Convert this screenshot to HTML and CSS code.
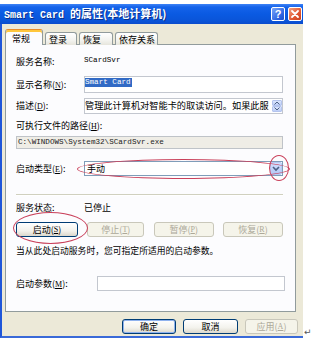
FILE: index.html
```html
<!DOCTYPE html>
<html>
<head>
<meta charset="utf-8">
<link rel="stylesheet" href="styles.css">
</head>
<body>
<div class="page">
  <div class="window">
    <div class="titlebar">
      <div class="title"><span class="lat">Smart Card </span>的属性(本地计算机)</div>
      <div class="tbtns">
        <div class="tbtn help">?</div>
        <div class="tbtn close"><svg width="12" height="12" viewBox="0 0 12 12"><path d="M3 3 L9 9 M9 3 L3 9" stroke="#fff" stroke-width="1.8" stroke-linecap="round"/></svg></div>
      </div>
    </div>
    <div class="frame">
      <div class="tabs">
        <div class="tab active t1">常规</div>
        <div class="tab t2">登录</div>
        <div class="tab t3">恢复</div>
        <div class="tab t4">依存关系</div>
      </div>
      <div class="panel">
        <div class="row r1"><div class="label">服务名称:</div><div class="mono val-mono">SCardSvr</div></div>
        <div class="row r2"><div class="label">显示名称(<u>N</u>):</div><div class="field f-name"><span class="sel mono">Smart Card</span></div></div>
        <div class="row r3"><div class="label">描述(<u>D</u>):</div><div class="field f-desc"><span class="desc">管理此计算机对智能卡的取读访问。如果此服</span><div class="spin"><div class="sb"><svg width="6" height="4" viewBox="0 0 6 4"><path d="M0.5 3.5 L3 1 L5.5 3.5" fill="none" stroke="#4d6185" stroke-width="1"/></svg></div><div class="sb"><svg width="6" height="4" viewBox="0 0 6 4"><path d="M0.5 0.5 L3 3 L5.5 0.5" fill="none" stroke="#4d6185" stroke-width="1"/></svg></div></div></div></div>
        <div class="row r4"><div class="label">可执行文件的路径(<u>H</u>):</div></div>
        <div class="row r5"><div class="field f-path mono">C:\WINDOWS\System32\SCardSvr.exe</div></div>
        <div class="row r6"><div class="label">启动类型(<u>E</u>):</div><div class="combo"><span class="ctext">手动</span><div class="dd"><svg width="8" height="6" viewBox="0 0 8 6"><path d="M1 1 L4 4 L7 1" fill="none" stroke="#4d6185" stroke-width="1.6"/></svg></div></div></div>
        <div class="sep"></div>
        <div class="row r7"><div class="label">服务状态:</div><div class="val">已停止</div></div>
        <div class="row r8 btnrow">
          <div class="btn b-start">启动(<u>S</u>)</div>
          <div class="btn dis b-stop">停止(<u>T</u>)</div>
          <div class="btn dis b-pause">暂停(<u>P</u>)</div>
          <div class="btn dis b-resume">恢复(<u>R</u>)</div>
        </div>
        <div class="row r9">当从此处启动服务时，您可指定所适用的启动参数。</div>
        <div class="row r10"><div class="label lw">启动参数(<u>M</u>):</div><div class="field f-param"></div></div>
      </div>
      <div class="footer">
        <div class="btn def b-ok">确定</div>
        <div class="btn b-cancel">取消</div>
        <div class="btn dis b-apply">应用(<u>A</u>)</div>
      </div>
    </div>
    <div class="ring ring-combo"></div>
    <div class="ring ring-dd"></div>
    <div class="ring ring-start"></div>
  </div>
  <span class="ret">↵</span>
</div>
</body>
</html>
```

FILE: styles.css
```css
* { box-sizing: border-box; }
html, body { margin: 0; padding: 0; background: #fff; }
body {
  font-family: "Noto Sans CJK SC", "Noto Sans", sans-serif;
  font-size: 9px;
  color: #000;
  line-height: 1;
}
.page {
  width: 317px;
  height: 338px;
  display: flex;
  align-items: flex-end;
}
.window {
  position: relative;
  width: 303px;
  height: 334px;
  display: flex;
  flex-direction: column;
  flex: none;
}
.titlebar {
  height: 20px;
  flex: none;
  display: flex;
  align-items: center;
  justify-content: space-between;
  padding: 0 1px 0 4px;
  background: linear-gradient(#3f83f5 0, #1563ea 3px, #0a5ae2 50%, #0a54d8 85%, #0b4ccc 100%);
}
.title {
  color: #fff;
  font-weight: bold;
  font-size: 11px;
  white-space: nowrap;
  text-shadow: 1px 1px 0 #0b2f8a;
}
.title .lat {
  font-family: "Liberation Mono", monospace;
  font-size: 10px;
  white-space: pre;
}
.tbtns { display: flex; gap: 3px; }
.tbtn {
  width: 14px;
  height: 14px;
  border: 1px solid #fff;
  border-radius: 2px;
  display: flex;
  align-items: center;
  justify-content: center;
}
.help {
  background: linear-gradient(135deg, #7aa6fa, #2c62e0 70%, #1d4fcc);
  color: #fff;
  font-family: "Liberation Sans", sans-serif;
  font-weight: bold;
  font-size: 11px;
}
.close {
  background: linear-gradient(135deg, #f2a080, #e0552f 60%, #c9401e);
}
.frame {
  flex: 1;
  background: #ece9d8;
  border-left: 2px solid #1f56d9;
  border-bottom: 2px solid #3a6ad8;
  padding: 5px 0 0 3px;
  display: flex;
  flex-direction: column;
}
.tabs {
  display: flex;
  align-items: flex-end;
  height: 16px;
  margin-bottom: -1px;
  position: relative;
  z-index: 1;
}
.tab {
  height: 13px;
  border: 1px solid #919b9c;
  border-bottom: none;
  border-radius: 3px 3px 0 0;
  background: linear-gradient(#ffffff, #f3f3ef 60%, #e6e5dc);
  display: flex;
  align-items: center;
  padding-left: 3px;
  margin-right: 2px;
}
.tab.active {
  height: 16px;
  background: #fcfcfe;
  border-top: 1px solid #e68b2c;
  box-shadow: inset 0 2px 0 #ffc73c;
  padding-left: 6px;
  padding-top: 1px;
}
.t1 { width: 38px; }
.t2 { width: 32px; }
.t3 { width: 34px; margin-right: 2px; }
.t4 { width: 43px; }
.panel {
  width: 291px;
  height: 268px;
  border: 1px solid #919b9c;
  background: #fcfcfe;
  padding-left: 10px;
  display: flex;
  flex-direction: column;
}
.row {
  display: flex;
  align-items: center;
  flex: none;
}
.label { width: 68px; flex: none; white-space: nowrap; }
.label u, .btn u { font-family: "Liberation Serif", serif; font-size: 8px; }
.lw { width: 81px; }
.mono { font-family: "Liberation Mono", monospace; font-size: 7.6px; }
.r1 { margin-top: 9px; height: 14px; }
.r2 { margin-top: 8px; height: 17px; }
.r3 { margin-top: 5px; height: 16px; }
.r4 { margin-top: 5px; height: 14px; }
.r5 { margin-top: 3px; height: 13px; }
.r6 { margin-top: 12px; height: 15px; }
.sep {
  margin-top: 18px;
  width: 267px;
  height: 2px;
  border-top: 1px solid #d0d0bf;
  border-bottom: 1px solid #fff;
  flex: none;
}
.r7 { margin-top: 4px; height: 14px; }
.r8 { margin-top: 8px; height: 15px; }
.r9 { margin-top: 7px; height: 14px; font-size: 8.8px; white-space: nowrap; }
.r10 { margin-top: 18px; height: 15px; }
.field {
  border: 1px solid #c3c7cf;
  background: #fff;
  height: 100%;
}
.f-name {
  width: 199px;
  display: flex;
  align-items: flex-start;
  padding-top: 1px;
}
.sel {
  background: #316ac5;
  color: #fff;
  height: 9px;
  line-height: 9px;
  padding: 0 1px 0 0;
}
.f-desc {
  width: 199px;
  display: flex;
  justify-content: space-between;
  align-items: flex-start;
  padding: 1px 0 0 0;
}
.desc { font-size: 9.2px; white-space: nowrap; padding-top: 1px; }
.spin { display: flex; flex-direction: column; margin-right: 0; }
.sb {
  width: 10px;
  height: 6px;
  background: linear-gradient(#dbe5fc, #bccdf6);
  border: 1px solid #b4c4ee;
  border-radius: 1px;
  display: flex;
  align-items: center;
  justify-content: center;
}
.f-path {
  width: 267px;
  background: #efede6;
  border-color: #bfc3c8;
  color: #222;
  display: flex;
  align-items: center;
  padding-left: 1px;
  white-space: nowrap;
}
.combo {
  width: 199px;
  height: 100%;
  border: 1px solid #7f9db9;
  background: #fff;
  display: flex;
  align-items: center;
  justify-content: space-between;
}
.ctext { padding-left: 2px; }
.dd {
  width: 12px;
  height: 13px;
  background: linear-gradient(#d2e0fd, #b4c8f7);
  border: 1px solid #b7c9f5;
  border-radius: 2px;
  display: flex;
  align-items: center;
  justify-content: center;
}
.btnrow { width: 267px; justify-content: space-between; }
.btn {
  height: 15px;
  border: 1px solid #003c74;
  border-radius: 3px;
  background: linear-gradient(#ffffff, #f3f2ec 60%, #dcd8cc);
  display: flex;
  align-items: center;
  justify-content: center;
  white-space: nowrap;
  flex: none;
}
.btn.dis {
  border-color: #c9c7ba;
  color: #aca899;
  background: #f5f4ea;
}
.btn.def { box-shadow: inset 0 0 0 1px #8fb2ee; }
.b-start { width: 62px; }
.b-stop { width: 57px; }
.b-pause { width: 60px; }
.b-resume { width: 60px; }
.f-param { width: 188px; }
.footer {
  margin-top: 7px;
  width: 293px;
  height: 15px;
  display: flex;
  justify-content: flex-end;
  gap: 7px;
  flex: none;
}
.b-ok { width: 54px; }
.b-cancel { width: 55px; }
.b-apply { width: 53px; }
.ring {
  position: absolute;
  border: 1px solid #c9405a;
  border-radius: 50%;
  pointer-events: none;
}
.ring-combo { left: 77px; top: 155px; width: 213px; height: 20px; }
.ring-dd { left: 269px; top: 151px; width: 20px; height: 26px; }
.ring-start { left: 13px; top: 208px; width: 75px; height: 32px; }
.ret {
  font-family: "DejaVu Sans", sans-serif;
  font-size: 9px;
  color: #555;
  margin-left: 1px;
  margin-bottom: 1px;
}
```
